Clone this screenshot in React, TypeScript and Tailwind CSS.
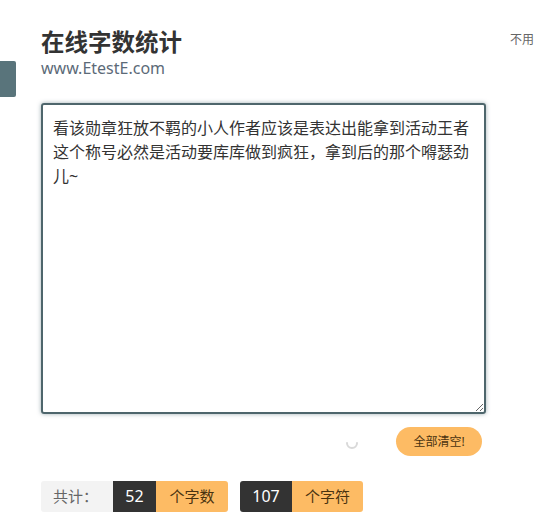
import { useState } from "react";

const initialText =
  "看该勋章狂放不羁的小人作者应该是表达出能拿到活动王者这个称号必然是活动要库库做到疯狂，拿到后的那个嘚瑟劲儿~";

function countWords(text: string) {
  const cjk = text.match(/[\u4e00-\u9fa5]/g) || [];
  return cjk.length;
}

// bytes-ish: anything outside ascii counts double
function countChars(text: string) {
  let n = 0;
  for (const ch of text) n += ch.charCodeAt(0) > 255 ? 2 : 1;
  return n;
}

function Spinner() {
  return (
    <svg width="14" height="14" viewBox="0 0 14 14" className="mr-[37px] mt-[2px]">
      <path d="M2 7 A5 5 0 0 0 12 7" fill="none" stroke="#d9d9d9" strokeWidth="2" strokeLinecap="round" />
    </svg>
  );
}

export default function App() {
  const [text, setText] = useState(initialText);

  return (
    <div
      className="relative w-[534px] h-[515px] overflow-hidden bg-white"
      style={{ fontFamily: '"Noto Sans", "Noto Sans CJK SC", sans-serif' }}
    >
      {/* side tab */}
      <div className="absolute left-0 top-[61px] h-[36px] w-[16px] rounded-r-[2px] bg-[#59747b]" />

      <div className="flex">
        <div className="ml-[41px] w-[445px] shrink-0">
          <h1 className="pt-[27px] text-[23.5px] font-bold leading-[30px] text-[#333]">在线字数统计</h1>
          <div className="text-[16px] leading-[22px] text-[#5c6a78]">www.EtestE.com</div>

          <textarea
            value={text}
            onChange={(e) => setText(e.target.value)}
            className="mt-[24px] block h-[311px] w-[445px] rounded-[3px] border-2 border-[#4e666c] px-[10px] py-[11px] text-[16px] leading-[24px] text-[#333] shadow-[0_0_4px_rgba(80,110,118,0.55)] outline-none"
          />

          <div className="mt-[13px] flex items-center justify-end pr-[4px]">
            <Spinner />
            <button className="h-[29px] w-[86px] rounded-full bg-[#fdbb64] text-[12px] text-[#4a3310]">
              全部清空!
            </button>
          </div>

          <div className="mt-[25px] flex items-stretch text-[15px] leading-[31px]">
            <div className="flex rounded-[3px] overflow-hidden">
              <span className="w-[72px] bg-[#f3f3f3] pl-[12px] text-[#666]">共计：</span>
              <span className="w-[43px] bg-[#333] text-center text-[16px] text-white">{countWords(text)}</span>
              <span className="w-[72px] bg-[#fdbb64] text-center text-[#4a3310]">个字数</span>
            </div>
            <div className="ml-[12px] flex rounded-[3px] overflow-hidden">
              <span className="w-[52px] bg-[#333] text-center text-[16px] text-white">{countChars(text)}</span>
              <span className="w-[71px] bg-[#fdbb64] text-center text-[#4a3310]">个字符</span>
            </div>
          </div>
        </div>

        <div className="ml-[24px] whitespace-nowrap pt-[31px] text-[12px] text-[#666]">不用</div>
      </div>
    </div>
  );
}
